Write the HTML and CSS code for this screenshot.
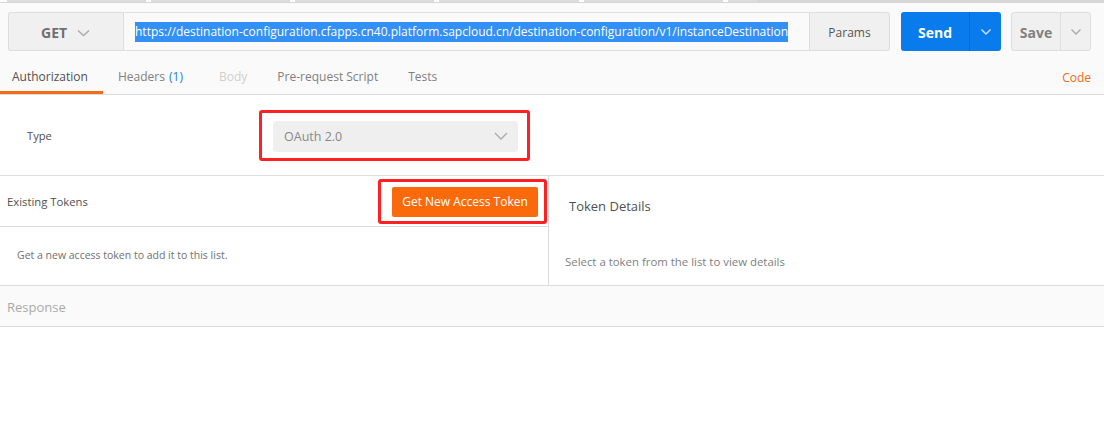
FILE: index.html
```html
<!DOCTYPE html>
<html>
<head>
<meta charset="utf-8">
<link rel="stylesheet" href="styles.css">
</head>
<body>
<div class="tabstrip">
  <span class="ts ts-w1"></span><span class="ts ts-g" style="width:139px"></span><span class="ts ts-w"></span><span class="ts ts-g" style="width:139px"></span><span class="ts ts-w"></span><span class="ts ts-g" style="width:139px"></span><span class="ts ts-w"></span><span class="ts ts-g" style="width:140px"></span><span class="ts ts-w"></span><span class="ts ts-g" style="width:139px"></span><span class="ts ts-w"></span><span class="ts ts-g" style="width:30px"></span><span class="ts-rest"></span>
</div>
<div class="top">
  <div class="reqrow">
    <div class="method"><span class="method-label">GET</span><svg class="chev" width="13" height="8" viewBox="0 0 13 8"><path d="M1 1.5 L6.5 6.5 L12 1.5" fill="none" stroke="#aaa" stroke-width="1.4"/></svg></div>
    <div class="url"><span class="sel">https://destination-configuration.cfapps.cn40.platform.sapcloud.cn/destination-configuration/v1/instanceDestination</span></div>
    <div class="params">Params</div>
    <div class="send"><span class="send-main">Send</span><span class="send-arrow"><svg width="12" height="8" viewBox="0 0 12 8"><path d="M1.5 1.5 L6 6 L10.5 1.5" fill="none" stroke="#cfe3fb" stroke-width="1.4"/></svg></span></div>
    <div class="save"><span class="save-main">Save</span><span class="save-arrow"><svg width="12" height="8" viewBox="0 0 12 8"><path d="M1.5 1.5 L6 6 L10.5 1.5" fill="none" stroke="#aaa" stroke-width="1.4"/></svg></span></div>
  </div>
  <div class="tabs">
    <div class="tab active">Authorization</div>
    <div class="tab">Headers <span class="count">(1)</span></div>
    <div class="tab disabled">Body</div>
    <div class="tab">Pre-request Script</div>
    <div class="tab">Tests</div>
    <div class="tab code">Code</div>
  </div>
</div>
<div class="type-row">
  <div class="type-label">Type</div>
  <div class="redbox redbox-type">
    <div class="dropdown"><span>OAuth 2.0</span><svg width="14" height="8" viewBox="0 0 14 8"><path d="M1 1 L7 7 L13 1" fill="none" stroke="#aaa" stroke-width="1.3"/></svg></div>
  </div>
</div>
<div class="tokens">
  <div class="tok-left">
    <div class="tok-head">
      <span class="tok-title">Existing Tokens</span>
      <div class="redbox redbox-btn"><button class="getbtn">Get New Access Token</button></div>
    </div>
    <div class="tok-body">Get a new access token to add it to this list.</div>
  </div>
  <div class="tok-right">
    <div class="det-title">Token Details</div>
    <div class="det-body">Select a token from the list to view details</div>
  </div>
</div>
<div class="response">Response</div>
</body>
</html>
```
FILE: styles.css
```css
* { box-sizing: border-box; }
html, body { margin: 0; padding: 0; background: #fff; }
body { font-family: "Open Sans", "Liberation Sans", sans-serif; color: #505050; width: 1104px; height: 425px; overflow: hidden; }

.tabstrip { display: flex; height: 3px; background: #d6d6d6; border-bottom: 1px solid #d6d6d6; }
.ts { display: block; height: 2px; }
.ts-w1 { width: 7px; background: #fff; }
.ts-w { width: 5px; background: #fff; }
.ts-g { background: #dcdcdc; }
.ts-rest { flex: 1; }

.top { background: #fafafa; border-bottom: 1px solid #dcdcdc; }
.reqrow { display: flex; padding: 9px 13px 0 8px; height: 49px; }
.method { width: 115px; height: 39px; background: #f0f0f0; border: 1px solid #dedede; border-right: none; border-radius: 3px 0 0 3px; display: flex; align-items: center; padding: 1px 0 0 32px; gap: 10px; }
.method-label { font-weight: 700; font-size: 14px; color: #707070; }
.chev { margin-top: 1px; }
.url { width: 687px; height: 39px; background: #fafafa; border: 1px solid #dedede; display: flex; align-items: center; padding: 1px 0 0 11px; font-size: 12px; white-space: nowrap; overflow: hidden; }
.sel { background: #3390f7; color: #fff; line-height: 20px; }
.params { width: 80px; height: 39px; background: #f0f0f0; border: 1px solid #dedede; border-left: none; border-radius: 0 3px 3px 0; display: flex; align-items: center; justify-content: center; padding-top: 1px; font-size: 12px; color: #555; }
.send { margin-left: 11px; width: 100px; height: 39px; background: #097bed; border-radius: 3px; display: flex; color: #fff; }
.send-main { width: 69px; display: flex; align-items: center; justify-content: center; padding-top: 1px; font-weight: 700; font-size: 14px; border-right: 1px solid #0a68c6; }
.send-arrow { flex: 1; display: flex; align-items: center; justify-content: center; }
.save { margin-left: 10px; width: 80px; height: 39px; background: #f0f0f0; border: 1px solid #dedede; border-radius: 3px; display: flex; }
.save-main { width: 49px; display: flex; align-items: center; justify-content: center; padding-top: 1px; font-weight: 700; font-size: 14px; color: #808080; border-right: 1px solid #dedede; }
.save-arrow { flex: 1; display: flex; align-items: center; justify-content: center; }

.tabs { display: flex; height: 42px; align-items: flex-end; padding-right: 13px; }
.tab { font-size: 12px; color: #808080; padding: 0 15px 6px; border-bottom: 3px solid transparent; line-height: 17px; }
.tab.active { color: #505050; border-bottom-color: #f26b16; width: 103px; padding-left: 12px; padding-right: 0; }
.tab .count { color: #1a7ee6; margin-left: 1px; }
.tab.disabled { color: #d0d0d0; margin-left: 6px; }
.tab.code { margin-left: auto; padding: 0 0 5px; color: #f26b16; }

.type-row { display: flex; align-items: center; height: 81px; padding-left: 27px; border-bottom: 1px solid #dcdcdc; }
.type-label { font-size: 11.2px; color: #505050; width: 232px; }
.redbox { border: 3px solid #ff2121; border-radius: 3px; }
.redbox-type { padding: 8px 9px 6px 11px; }
.dropdown { width: 245px; height: 31px; background: #efefef; border-radius: 3px; display: flex; align-items: center; justify-content: space-between; padding: 0 10px 0 11px; font-size: 12.5px; color: #888; }

.tokens { display: flex; height: 110px; border-bottom: 1px solid #dcdcdc; }
.tok-left { width: 549px; border-right: 1px solid #dcdcdc; display: flex; flex-direction: column; }
.tok-head { height: 51px; display: flex; align-items: center; justify-content: space-between; padding: 0 1px 0 7px; border-bottom: 1px solid #dcdcdc; }
.tok-title { font-size: 11.3px; color: #505050; }
.redbox-btn { padding: 5px 6px 4px 11px; }
.getbtn { width: 146px; height: 30px; background: #fa6a0a; border: none; border-radius: 2px; color: #fff; font-family: inherit; font-size: 12px; padding: 0; display: block; }
.tok-body { flex: 1; display: flex; align-items: center; padding-left: 17px; font-size: 10.5px; color: #707070; padding-bottom: 2px; }
.tok-right { flex: 1; }
.det-title { font-size: 13px; color: #505050; padding: 21px 0 0 20px; }
.det-body { font-size: 11.4px; color: #808080; padding: 39px 0 0 16px; }

.response { height: 41px; background: #fafafa; border-bottom: 1px solid #dcdcdc; display: flex; align-items: center; padding-left: 7px; padding-top: 2px; font-size: 13px; color: #aaa; }
```
